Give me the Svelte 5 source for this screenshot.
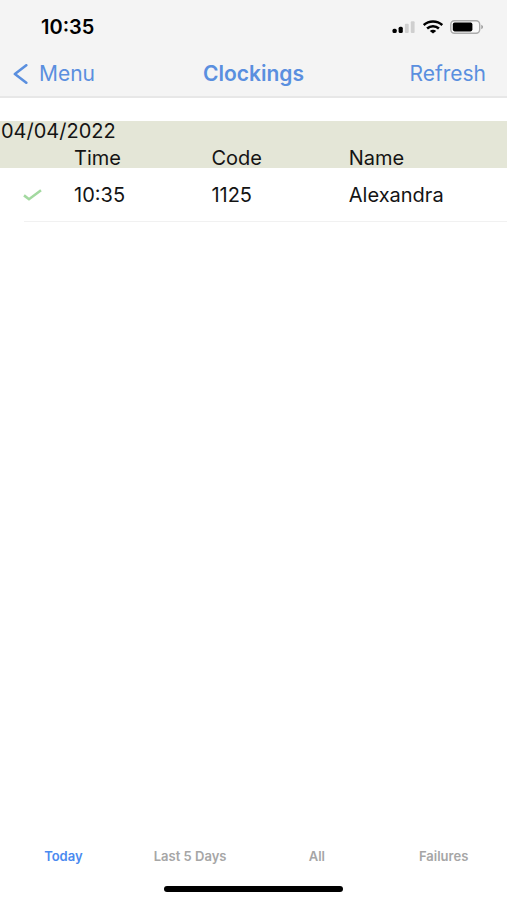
<script>
  const days = [
    { date: '04/04/2022', rows: [{ time: '10:35', code: '1125', name: 'Alexandra' }] }
  ];
  const tabs = ['Today', 'Last 5 Days', 'All', 'Failures'];
  let active = $state('Today');
</script>

<div class="screen">
  <header>
    <div class="status">
      <time>10:35</time>
      <div class="indicators">
        <svg width="24" height="14" viewBox="0 0 24 14" aria-hidden="true">
          <rect x="0.5" y="8.8" width="4.2" height="4.2" rx="1.5" />
          <rect x="6.6" y="6.8" width="4.2" height="6.2" rx="1.5" />
          <rect x="12.9" y="3.8" width="3.8" height="9.2" rx="1" fill="#cfcfcf" />
          <rect x="18.8" y="1.2" width="3.8" height="11.8" rx="1" fill="#cfcfcf" />
        </svg>
        <svg width="20" height="14" viewBox="0 0 20 14" aria-hidden="true">
          <g fill="none" stroke="#000" stroke-width="2.5">
            <path d="M.7 5.1C5.8.3 14.2.3 19.3 5.1" />
            <path d="M4.1 8.5c3.3-3 8.5-3 11.8 0" />
          </g>
          <path d="M6.8 10.9c1.8-1.5 4.6-1.5 6.4 0L10 13.5z" />
        </svg>
        <svg width="34" height="14" viewBox="0 0 34 14" aria-hidden="true">
          <rect x=".8" y=".8" width="28.9" height="12.4" rx="3.6" fill="#fafafa" stroke="#acacac" stroke-width="1.4" />
          <rect x="2.8" y="2.6" width="19.6" height="8.8" rx="1.8" />
          <path d="M31.3 4.8c2.2.8 2.2 3.6 0 4.4z" fill="#999" />
        </svg>
      </div>
    </div>
    <nav class="bar" aria-label="Page">
      <button class="back">
        <svg width="15" height="20" viewBox="0 0 15 20" aria-hidden="true">
          <path d="M13.3 1.3 1.9 10l11.4 8.7" fill="none" stroke="#5a8fdf" stroke-width="2.6" stroke-linecap="round" stroke-linejoin="round" />
        </svg>
        Menu
      </button>
      <h1>Clockings</h1>
      <button class="refresh">Refresh</button>
    </nav>
  </header>

  <main>
    {#each days as day}
      <table>
        <colgroup>
          <col class="mark" />
          <col class="field" />
          <col class="field" />
          <col />
        </colgroup>
        <thead>
          <tr class="date"><th colspan="4">{day.date}</th></tr>
          <tr class="labels"><td></td><th>Time</th><th>Code</th><th>Name</th></tr>
        </thead>
        <tbody>
          {#each day.rows as row}
            <tr>
              <td class="tick">
                <svg width="19" height="12" viewBox="0 0 19 12" role="img" aria-label="Accepted">
                  <path d="M1 6.4 6 10.2 18 1.2" fill="none" stroke="#a3d9a0" stroke-width="2.6" />
                </svg>
              </td>
              <td>{row.time}</td>
              <td>{row.code}</td>
              <td>{row.name}</td>
            </tr>
          {/each}
        </tbody>
      </table>
    {/each}
  </main>

  <footer>
    <nav class="tabs" aria-label="Period">
      {#each tabs as tab}
        <button class:active={tab === active} onclick={() => (active = tab)}>{tab}</button>
      {/each}
    </nav>
    <div class="home"></div>
  </footer>
</div>

<style>
  :global(body) {
    margin: 0;
  }
  .screen {
    display: flex;
    flex-direction: column;
    min-height: 100vh;
    background: #fff;
    color: #141414;
    font-family: Inter, 'Liberation Sans', sans-serif;
    font-size: 20px;
    line-height: 24px;
  }
  button {
    padding: 0;
    border: 0;
    background: none;
    color: inherit;
    font: inherit;
    cursor: pointer;
  }
  header {
    background: #f4f4f4;
    border-bottom: 2px solid #e7e7e7;
  }
  .status {
    display: flex;
    justify-content: space-between;
    align-items: center;
    padding: 15px 23px 0 41px;
    color: #000;
  }
  .status time {
    font-weight: 600;
  }
  .indicators {
    display: flex;
    gap: 7px;
  }
  .bar {
    display: grid;
    grid-template-columns: 1fr auto 1fr;
    align-items: center;
    padding: 23px 13px 10px;
    color: #5a8fdf;
    font-size: 21px;
  }
  .back {
    display: flex;
    align-items: center;
    gap: 11px;
    justify-self: start;
  }
  .refresh {
    justify-self: end;
    padding-right: 8px;
  }
  h1 {
    margin: 0;
    font-size: inherit;
    font-weight: 600;
  }
  main {
    flex: 1;
    padding-top: 23px;
  }
  table {
    width: 100%;
    table-layout: fixed;
    border-collapse: collapse;
  }
  .mark {
    width: 14.6%;
  }
  .field {
    width: 27.1%;
  }
  th,
  td {
    padding: 0;
    font-weight: 400;
    text-align: left;
  }
  thead {
    background: #e4e6d7;
  }
  .date th {
    height: 20px;
    padding-left: 1px;
    line-height: 20px;
  }
  .labels th {
    height: 27px;
    padding-top: 7px;
    box-sizing: border-box;
    line-height: 20px;
  }
  tbody tr {
    height: 54px;
    background: linear-gradient(#f1f1f1, #f1f1f1) 24px 100% / 100% 1px no-repeat;
  }
  .tick {
    padding-left: 23px;
  }
  .tick svg {
    display: block;
  }
  .tabs {
    display: grid;
    grid-template-columns: repeat(4, 1fr);
    color: #a6a6a6;
    font-size: 13px;
    font-weight: 600;
  }
  .tabs .active {
    color: #4a8af0;
  }
  .home {
    width: 35.5%;
    height: 6px;
    margin: 18px auto 8px;
    border-radius: 3px;
    background: #000;
  }
</style>
